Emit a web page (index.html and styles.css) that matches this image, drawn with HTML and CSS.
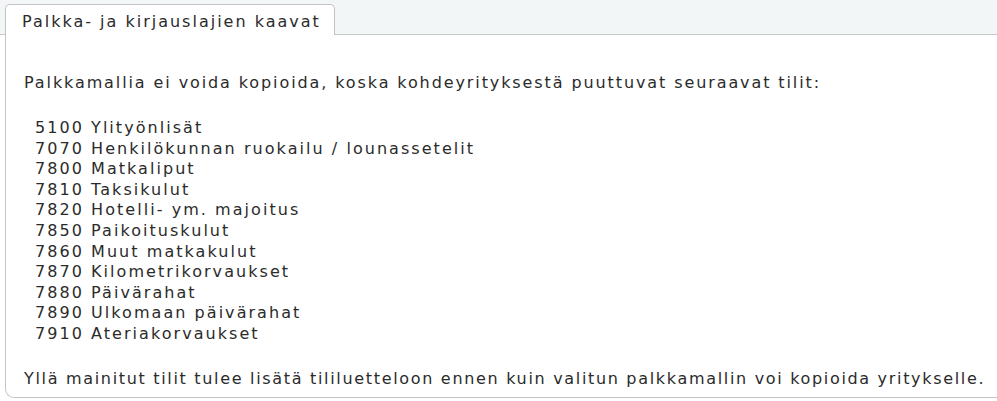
FILE: index.html
```html
<!DOCTYPE html>
<html>
<head>
<meta charset="utf-8">
<link rel="stylesheet" href="styles.css">
</head>
<body>
<div class="tabs">
  <div class="tabbar">
    <div class="tab">Palkka- ja kirjauslajien kaavat</div>
  </div>
  <div class="panel">
    <p class="intro">Palkkamallia ei voida kopioida, koska kohdeyrityksestä puuttuvat seuraavat tilit:</p>
    <ul class="accounts">
      <li>5100 Ylityönlisät</li>
      <li>7070 Henkilökunnan ruokailu / lounassetelit</li>
      <li>7800 Matkaliput</li>
      <li>7810 Taksikulut</li>
      <li>7820 Hotelli- ym. majoitus</li>
      <li>7850 Paikoituskulut</li>
      <li>7860 Muut matkakulut</li>
      <li>7870 Kilometrikorvaukset</li>
      <li>7880 Päivärahat</li>
      <li>7890 Ulkomaan päivärahat</li>
      <li>7910 Ateriakorvaukset</li>
    </ul>
    <p class="outro">Yllä mainitut tilit tulee lisätä tililuetteloon ennen kuin valitun palkkamallin voi kopioida yritykselle.</p>
  </div>
</div>
</body>
</html>
```

FILE: styles.css
```css
html, body {
  margin: 0;
  padding: 0;
  background: #ffffff;
}
body {
  font-family: "DejaVu Sans", Verdana, sans-serif;
  font-size: 16px;
  letter-spacing: 1.9px;
  color: #2b2b2b;
}
.tabs {
  display: flex;
  flex-direction: column;
  height: 401px;
}
.tabbar {
  background: #f3f6f7;
  height: 35px;
  box-sizing: border-box;
  padding: 4px 0 0 5px;
  border-bottom: 1px solid #c9c9c9;
  display: flex;
  align-items: flex-end;
}
.tab {
  background: #ffffff;
  border: 1px solid #c4c4c4;
  border-bottom: none;
  border-radius: 5px 5px 0 0;
  height: 31px;
  margin-bottom: -1px;
  box-sizing: border-box;
  width: 330px;
  padding: 8px 0 0 16px;
  line-height: 18px;
  letter-spacing: 2px;
}
.panel {
  flex: 1;
  border-left: 1px solid #c4c4c4;
  border-bottom: 1px solid #c4c4c4;
  border-bottom-left-radius: 9px;
  margin-left: 5px;
  margin-bottom: 3px;
  padding: 0 0 0 18px;
}
.intro {
  margin: 38px 0 0 0;
  line-height: 20px;
}
.accounts {
  list-style: none;
  margin: 25px 0 0 0;
  padding: 0 0 0 11px;
  line-height: 20.6px;
  letter-spacing: 2.05px;
}
.outro {
  margin: 24px 0 0 0;
  line-height: 20px;
  letter-spacing: 1.68px;
  white-space: nowrap;
}
```
